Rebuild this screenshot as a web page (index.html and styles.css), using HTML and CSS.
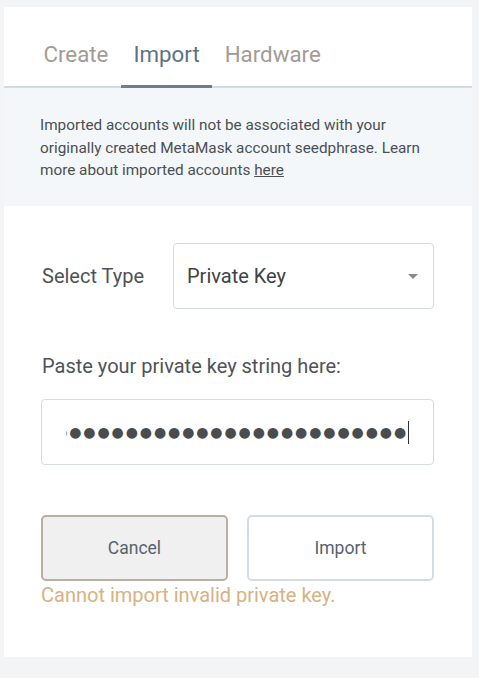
FILE: index.html
```html
<!DOCTYPE html>
<html>
<head>
<meta charset="utf-8">
<link rel="stylesheet" href="styles.css">
</head>
<body>
<div class="card">
  <div class="tabs">
    <div class="tab">Create</div>
    <div class="tab active">Import</div>
    <div class="tab">Hardware</div>
  </div>
  <div class="notice">
    Imported accounts will not be associated with your originally created MetaMask account seedphrase. Learn more about imported accounts <a class="link">here</a>
  </div>
  <div class="form">
    <div class="type-row">
      <div class="label">Select Type</div>
      <div class="select">
        <span>Private Key</span>
        <span class="arrow"></span>
      </div>
    </div>
    <div class="paste-label">Paste your private key string here:</div>
    <div class="input">
      <div class="dots-clip"><span class="dots">●●●●●●●●●●●●●●●●●●●●●●●●●●●●●●●●●</span></div>
      <span class="caret"></span>
    </div>
    <div class="buttons">
      <div class="btn cancel">Cancel</div>
      <div class="btn import">Import</div>
    </div>
    <div class="error">Cannot import invalid private key.</div>
  </div>
</div>
</body>
</html>
```
FILE: styles.css
```css
html, body {
  margin: 0;
  padding: 0;
  background: #f3f4f5;
  font-family: Roboto, "Noto Sans", sans-serif;
}
body {
  padding: 7px 7px 0 4px;
  height: 678px;
  box-sizing: border-box;
}
.card {
  background: #ffffff;
  width: 468px;
  height: 650px;
  box-sizing: border-box;
}
.tabs {
  display: flex;
  padding: 27px 0 0 27px;
  height: 81px;
  box-sizing: border-box;
  border-bottom: 2px solid #d4dbdf;
}
.tab {
  font-size: 22.3px;
  color: #a29b95;
  padding: 0 12.5px;
  height: 54px;
  line-height: 40px;
  box-sizing: border-box;
}
.tab.active {
  color: #5e7283;
  border-bottom: 3px solid #6a7e8e;
}
.notice {
  background: #f4f7f9;
  height: 118px;
  box-sizing: border-box;
  padding: 26px 50px 0 36px;
  font-size: 15.3px;
  line-height: 22.5px;
  color: #4a4f54;
}
.link {
  color: #4a4f54;
  text-decoration: underline;
}
.form {
  padding: 37px 38px 0 37px;
}
.type-row {
  display: flex;
  align-items: center;
}
.label {
  font-size: 20px;
  color: #4f5357;
  width: 131px;
  padding-left: 1px;
}
.select {
  flex: 1;
  height: 66px;
  border: 1px solid #d6dde1;
  border-radius: 4px;
  box-sizing: border-box;
  display: flex;
  align-items: center;
  justify-content: space-between;
  padding: 0 15px 0 13px;
  font-size: 20px;
  color: #3f4346;
}
.arrow {
  width: 0;
  height: 0;
  border-left: 5px solid transparent;
  border-right: 5px solid transparent;
  border-top: 5px solid #8a8a8a;
}
.paste-label {
  margin-top: 46px;
  font-size: 20px;
  line-height: 23px;
  color: #4f5357;
  padding-left: 1px;
}
.input {
  margin-top: 21px;
  height: 66px;
  border: 1px solid #d6dde1;
  border-radius: 4px;
  box-sizing: border-box;
  display: flex;
  align-items: center;
  padding: 0 24px 0 24px;
}
.dots-clip {
  flex: 1;
  overflow: hidden;
  display: flex;
  justify-content: flex-end;
  white-space: nowrap;
  height: 24px;
  align-items: center;
}
.dots {
  font-size: 14px;
  letter-spacing: 1.9px;
  color: #4a4d50;
  font-family: "DejaVu Sans", sans-serif;
}
.caret {
  width: 1px;
  height: 23px;
  background: #333;
}
.buttons {
  display: flex;
  gap: 19px;
  margin-top: 50px;
}
.btn {
  flex: 1;
  height: 66px;
  border-radius: 5px;
  box-sizing: border-box;
  display: flex;
  align-items: center;
  justify-content: center;
  font-size: 17.5px;
  color: #56636f;
}
.cancel {
  background: #f0f0f0;
  border: 2px solid #b9aea3;
}
.import {
  background: #ffffff;
  border: 2px solid #d3dde2;
}
.error {
  font-size: 20px;
  line-height: 23px;
  color: #d7b283;
  margin-top: 3px;
}
```
